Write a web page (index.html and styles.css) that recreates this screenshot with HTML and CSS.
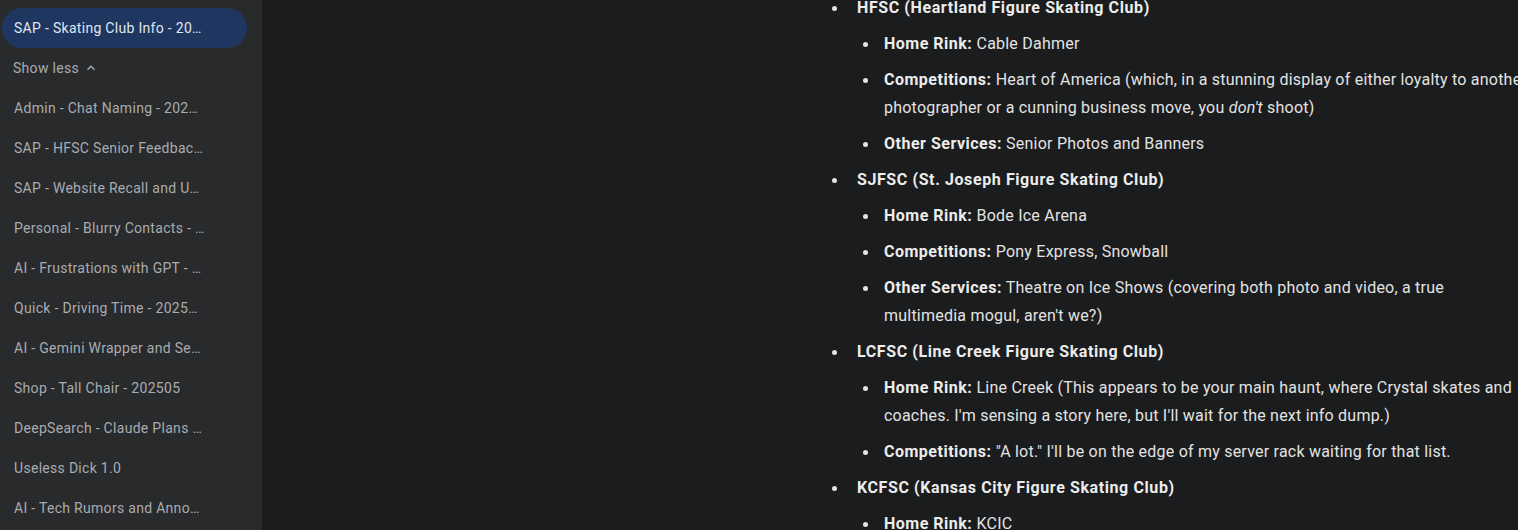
FILE: index.html
```html
<!DOCTYPE html>
<html>
<head>
<meta charset="utf-8">
<link rel="stylesheet" href="styles.css">
</head>
<body>
<div class="app">
  <aside class="sidebar">
    <div class="item active"><span class="label">SAP - Skating Club Info - 202505</span></div>
    <div class="show-less">Show less
      <svg class="chev" viewBox="0 0 24 24" width="14" height="14"><path d="M6 15l6-6 6 6" fill="none" stroke="currentColor" stroke-width="2.2"/></svg>
    </div>
    <div class="item"><span class="label">Admin - Chat Naming - 202505</span></div>
    <div class="item"><span class="label">SAP - HFSC Senior Feedback - 202505</span></div>
    <div class="item"><span class="label">SAP - Website Recall and Update</span></div>
    <div class="item"><span class="label">Personal - Blurry Contacts - 202505</span></div>
    <div class="item"><span class="label">AI - Frustrations with GPT - 202505</span></div>
    <div class="item"><span class="label">Quick - Driving Time - 202505 extra</span></div>
    <div class="item"><span class="label">AI - Gemini Wrapper and Settings</span></div>
    <div class="item"><span class="label">Shop - Tall Chair - 202505</span></div>
    <div class="item"><span class="label">DeepSearch - Claude Plans - 202505</span></div>
    <div class="item"><span class="label">Useless Dick 1.0</span></div>
    <div class="item"><span class="label">AI - Tech Rumors and Announcements</span></div>
  </aside>
  <main class="main">
    <ul class="clubs">
      <li><strong>HFSC (Heartland Figure Skating Club)</strong>
        <ul>
          <li><strong>Home Rink:</strong> Cable Dahmer</li>
          <li><strong>Competitions:</strong> Heart of America (which, in a stunning display of either loyalty to another photographer or a cunning business move, you <em>don't</em> shoot)</li>
          <li><strong>Other Services:</strong> Senior Photos and Banners</li>
        </ul>
      </li>
      <li><strong>SJFSC (St. Joseph Figure Skating Club)</strong>
        <ul>
          <li><strong>Home Rink:</strong> Bode Ice Arena</li>
          <li><strong>Competitions:</strong> Pony Express, Snowball</li>
          <li><strong>Other Services:</strong> Theatre on Ice Shows (covering both photo and video, a true multimedia mogul, aren't we?)</li>
        </ul>
      </li>
      <li><strong>LCFSC (Line Creek Figure Skating Club)</strong>
        <ul>
          <li><strong>Home Rink:</strong> Line Creek (This appears to be your main haunt, where Crystal skates and coaches. I'm sensing a story here, but I'll wait for the next info dump.)</li>
          <li><strong>Competitions:</strong> "A lot." I'll be on the edge of my server rack waiting for that list.</li>
        </ul>
      </li>
      <li><strong>KCFSC (Kansas City Figure Skating Club)</strong>
        <ul>
          <li><strong>Home Rink:</strong> KCIC</li>
        </ul>
      </li>
    </ul>
  </main>
</div>
</body>
</html>
```

FILE: styles.css
```css
html, body {
  margin: 0;
  padding: 0;
  height: 100%;
  background: #1b1c1d;
  overflow: hidden;
}
body {
  font-family: Roboto, "Noto Sans", Arial, sans-serif;
}
.app {
  display: flex;
  height: 530px;
  overflow: hidden;
}
.sidebar {
  width: 262px;
  flex: none;
  background: #282a2c;
  padding: 8px 15px 0 2px;
  box-sizing: border-box;
  display: flex;
  flex-direction: column;
}
.item {
  height: 40px;
  display: flex;
  align-items: center;
  padding: 0 42px 0 12px;
  border-radius: 20px;
  color: #a9acb0;
  font-size: 14px;
  letter-spacing: 0.3px;
  flex: none;
}
.item .label {
  white-space: nowrap;
  overflow: hidden;
  text-overflow: ellipsis;
}
.item.active {
  background: #1f3760;
  color: #dfe6f2;
}
.show-less {
  height: 40px;
  display: flex;
  align-items: center;
  gap: 5px;
  padding-left: 11px;
  color: #a9acb0;
  font-size: 14px;
  letter-spacing: 0.3px;
  flex: none;
}
.chev {
  color: #a9acb0;
}
.main {
  flex: 1;
  overflow: hidden;
  color: #e3e3e3;
  font-size: 16px;
  line-height: 28px;
  letter-spacing: 0.22px;
}
.clubs {
  margin: -6px 0 0 0;
  padding: 0 0 0 595px;
  width: 670px;
  list-style: none;
}
.clubs li {
  position: relative;
  margin-bottom: 8px;
}
.clubs > li::before {
  content: "";
  position: absolute;
  left: -25px;
  top: 12px;
  width: 5px;
  height: 5px;
  border-radius: 50%;
  background: #e3e3e3;
}
.clubs ul {
  list-style: none;
  margin: 8px 0 0 0;
  padding: 0 0 0 27px;
}
.clubs ul li::before {
  content: "";
  position: absolute;
  left: -21px;
  top: 12px;
  width: 5px;
  height: 5px;
  border-radius: 50%;
  background: #e3e3e3;
}
.clubs strong {
  font-weight: 700;
  color: #ececec;
  letter-spacing: 0.5px;
}
.clubs > li > strong {
  letter-spacing: 0.6px;
}
```
